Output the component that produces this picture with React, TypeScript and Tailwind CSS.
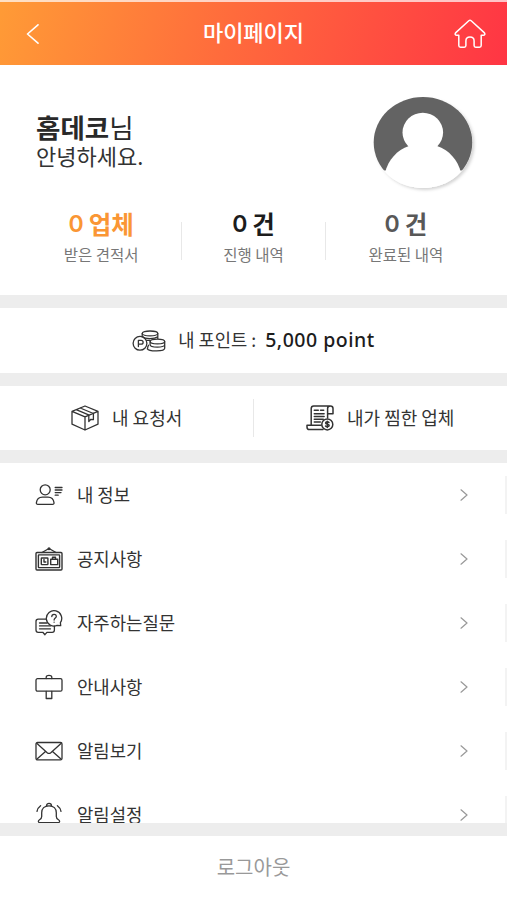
import React from "react";

interface IconProps {
  className?: string;
}

interface MenuItem {
  label: string;
  icon: React.FC<IconProps>;
}

const Svg: React.FC<{ className?: string; viewBox: string; width?: number; children: React.ReactNode }> = ({
  className,
  viewBox,
  width = 1.3,
  children,
}) => (
  <svg
    className={className}
    viewBox={viewBox}
    fill="none"
    stroke="currentColor"
    strokeWidth={width}
    strokeLinecap="round"
    strokeLinejoin="round"
  >
    {children}
  </svg>
);

const HomeIcon = ({ className }: IconProps) => (
  <Svg className={className} viewBox="0 0 32 30" width={1.5}>
    <path d="M14.8 1.7 1.8 13.6c-1.2 1.2-.6 2.7 1 2.7h2v10.2c0 1 .6 1.7 1.7 1.7h3.8c1 0 1.6-.6 1.6-1.6v-4.7c0-5.2 8.2-5.2 8.2 0v4.7c0 1 .6 1.6 1.6 1.6h3.8c1.1 0 1.7-.7 1.7-1.7V16.3h2c1.6 0 2.2-1.5 1-2.7L17.2 1.7c-.8-.7-1.6-.7-2.4 0Z" />
  </Svg>
);

const CoinsIcon = ({ className }: IconProps) => (
  <Svg className={className} viewBox="0 0 34 22">
    <ellipse cx="18" cy="3.4" rx="7.8" ry="2.4" />
    <path d="M10.2 3.6v3.2M25.8 3.6v5M10.8 6.6c2 2.600 11.500 2.600 15 .2M14.500 10.300h3.500" />
    <circle cx="8" cy="13.3" r="6.9" />
    <path d="M6.400 16.500v-6.200h2.700c2.700 0 2.700 3.900 0 3.900H6.400" />
    <ellipse cx="25.4" cy="11.5" rx="7.3" ry="2.4" />
    <path d="M18.100 11.700v3c0 3.200 14.600 3.200 14.600 0v-3M32.700 14.700v3.500c0 3.400-15.600 3.400-17.400.6M16.500 15.300c-.7 1-.9 2-.9 3.200" />
  </Svg>
);

const BoxIcon = ({ className }: IconProps) => (
  <Svg className={className} viewBox="0 0 28 26">
    <path d="M14 1 27 6.300v12.900L14 25 1 19.200V6.300ZM1 6.300l13 5.600 13-5.600M14 11.900V25M5.200 4.600l13 5.500M9.200 3l13.200 5.500" />
    <path d="M17.800 10.300v6.200l2.100-2.200 2.500.3V8.500" />
  </Svg>
);

const BillIcon = ({ className }: IconProps) => (
  <Svg className={className} viewBox="0 0 28 26" width={1.5}>
    <path d="M5.200 20V3.600C5.200 2 6 1 7.700 1h16.600M21.600 8.800V3.600c0-3.400 5.400-3.400 5.400 0v5.200h-5.400ZM21.600 8.800V13M17 24.600H3.400C1.800 24.600 1 23.400 1 22v-1.800h14.200M8.300 5.200h4M14.500 5.200h3.200M8.300 8.700h9.800M8.300 11.400h9.800M8.300 14.200h9M8.300 17h6" />
    <circle cx="21.3" cy="19.4" r="5.5" />
    <path d="M23 17.500c-1-1.200-3.400-.8-3.400.6 0 1.600 3.600.8 3.600 2.500 0 1.400-2.800 1.700-3.700.4M21.300 16.200v6.400" />
  </Svg>
);

const ProfileIcon = ({ className }: IconProps) => (
  <Svg className={className} viewBox="0 0 28 26">
    <circle cx="10.2" cy="7.8" r="5" />
    <path d="M2.800 22.300h14.800c1 0 1.500-.6 1.400-1.600-.5-3.600-2.900-5.500-6-5.500H7.400c-3.200 0-5.500 1.900-6 5.500-.1 1 .4 1.600 1.400 1.600Z" />
    <path d="M20.200 5.500H27M20.200 8H27M20.200 10.600H26M20.200 13.200h3" />
  </Svg>
);

const BoardIcon = ({ className }: IconProps) => (
  <Svg className={className} viewBox="0 0 28 26" width={1.4}>
    <path d="M7 6.500 14 2.500l7 4" />
    <circle cx="14" cy="2.8" r=".8" />
    <rect x="1" y="6.5" width="26" height="17.5" rx="1" />
    <rect x="3.4" y="8.9" width="21.2" height="12.7" rx=".5" />
    <rect x="6.3" y="12" width="6.6" height="6.6" rx=".5" />
    <path d="M9 13.500v2.500h1.800M15.700 13.200h7v5.400h-7ZM17.500 13v-1.800h3V13" />
  </Svg>
);

const FaqIcon = ({ className }: IconProps) => (
  <Svg className={className} viewBox="0 0 28 26">
    <path d="M25.700 15.600 25.400 12.700a7.700 7.700 0 1 0-3.200 2.700Z" />
    <path d="M16.800 6.600c0-3 4.500-3 4.500-.2 0 1.700-2.200 1.700-2.200 3.700M19.100 12.100v.1" />
    <path d="M11.400 9.200H3.200C1.800 9.200 1 10 1 11.400v8.700c0 1.400.8 2.200 2.200 2.200h4.600l2.100 2.400 2-2.400h5.300c1.400 0 2.200-.8 2.200-2.200v-4M4.500 13h7.500M4.500 15.900h11M4.500 18.800h11" />
  </Svg>
);

const SignIcon = ({ className }: IconProps) => (
  <Svg className={className} viewBox="0 0 28 26">
    <rect x="1" y="4.7" width="26" height="12.5" rx="1.5" />
    <path d="M11.200 4.500V3.200c0-2.500 5.600-2.500 5.600 0v1.300M11.200 17.300v7.200h5.600v-7.200" />
  </Svg>
);

const MailIcon = ({ className }: IconProps) => (
  <Svg className={className} viewBox="0 0 28 26">
    <rect x="1" y="4.5" width="26" height="17.4" rx="1.5" />
    <path d="m2 5.400 10.200 9.300c1.200 1 2.400 1 3.600 0L26 5.400M2 21l8.500-7.600M26 21l-8.500-7.600" />
  </Svg>
);

const BellIcon = ({ className }: IconProps) => (
  <Svg className={className} viewBox="0 0 28 26">
    <path d="M11.500 4c0-3.400 5-3.400 5 0M14 3.800c-4.600 0-7.300 3-7.300 7v3.700c0 1.800-.6 2.400-2.200 3.300-1.800 1-1.200 2.800.4 2.800h18.200c1.600 0 2.200-1.800.4-2.800-1.600-.9-2.200-1.500-2.200-3.300v-3.700c0-4-2.700-7-7.300-7Z" />
    <path d="M5.600 3.700C3.500 5.200 2.400 7 2 9.300M22.400 3.700c2.100 1.500 3.200 3.300 3.600 5.600" />
  </Svg>
);

const Avatar = () => (
  <svg className="h-[102px] w-[108px]" viewBox="0 0 108 102">
    <defs>
      <clipPath id="face">
        <ellipse cx="51" cy="48.5" rx="49.3" ry="45.5" />
      </clipPath>
      <filter id="shade" x="-20%" y="-20%" width="140%" height="140%">
        <feDropShadow dx="2" dy="2" stdDeviation="1.5" floodColor="#000" floodOpacity=".17" />
      </filter>
    </defs>
    <ellipse cx="51" cy="48.5" rx="49.3" ry="45.5" fill="#fff" filter="url(#shade)" />
    <g clipPath="url(#face)">
      <path d="M0 0h108v76.500H0z" fill="#636363" />
      <ellipse cx="50.8" cy="38.5" rx="20.3" ry="19.7" fill="#fff" />
      <path d="M13 79c3-13 12-23 24-27h28c12 4 21 14 24 27v22H13Z" fill="#fff" />
    </g>
  </svg>
);

const stats = [
  { value: "0", unit: "업체", label: "받은 견적서", color: "text-[#fa9634]" },
  { value: "0", unit: "건", label: "진행 내역", color: "text-[#1c1c1c]" },
  { value: "0", unit: "건", label: "완료된 내역", color: "text-[#585858]" },
];

const menu: MenuItem[] = [
  { label: "내 정보", icon: ProfileIcon },
  { label: "공지사항", icon: BoardIcon },
  { label: "자주하는질문", icon: FaqIcon },
  { label: "안내사항", icon: SignIcon },
  { label: "알림보기", icon: MailIcon },
  { label: "알림설정", icon: BellIcon },
];

const Gap = () => <div className="h-[13px] shrink-0 bg-[#ededed]" />;

const App: React.FC = () => {
  return (
    <div className="flex h-[900px] w-[507px] flex-col overflow-hidden bg-white font-['Noto_Sans_CJK_KR',sans-serif] text-[#333]">
      <header className="flex h-[65px] shrink-0 items-center justify-between border-t-2 border-white/70 bg-[linear-gradient(105deg,#ff9b36_0%,#ff6b3c_45%,#ff3544_100%)] pr-[21px] pl-[26px] text-white">
        <Svg className="h-5 w-8" viewBox="0 0 32 20" width={1.6}>
          <path d="M12 .8 1.500 10 12 19.200" />
        </Svg>
        <h1 className="mr-[5px] pb-[6px] text-[22px] leading-none font-medium">마이페이지</h1>
        <HomeIcon className="h-[30px] w-8" />
      </header>

      <section className="flex h-[230px] shrink-0 flex-col">
        <div className="flex h-[136px] items-start justify-between pt-[29px] pr-[27px] pl-9">
          <div className="pt-[19px]">
            <p className="text-[26.5px] leading-[28px] font-bold text-[#292929]">
              홈데코<span className="font-normal">님</span>
            </p>
            <p className="text-[22px] leading-[28px]">안녕하세요.</p>
          </div>
          <Avatar />
        </div>
        <div className="flex items-start pr-[21px] pl-[21px]">
          {stats.map((s, i) => (
            <React.Fragment key={s.label}>
              {i > 0 && <div className="mt-[21px] h-[38px] w-px shrink-0 bg-[#e8e8e8]" />}
              <div className={`flex flex-col items-center ${i === 1 ? "w-[143px]" : "w-[161px]"}`}>
                <span className={`flex gap-[5px] text-[24.5px] leading-[46px] font-bold ${s.color}`}>
                  <span className="font-['Inter'] text-[23px] font-semibold">{s.value}</span>
                  <span>{s.unit}</span>
                </span>
                <span className="text-[15.5px] leading-[15px] text-[#777]">{s.label}</span>
              </div>
            </React.Fragment>
          ))}
        </div>
      </section>
      <Gap />

      <section className="flex h-[65px] shrink-0 items-center justify-center pb-0.5">
        <CoinsIcon className="mt-0.5 mr-[12px] h-[22px] w-[34px]" />
        <span className="text-[17.7px]">내 포인트 :</span>
        <span className="ml-[9px] font-['Noto_Sans'] text-[19.5px] font-medium tracking-[0.5px] text-[#1c1c1c]">
          5,000 point
        </span>
      </section>
      <Gap />

      <section className="flex h-16 shrink-0 items-center text-[18px]">
        <div className="flex h-[38px] w-[254px] items-center border-r border-[#e8e8e8] pl-[71px]">
          <BoxIcon className="mr-[13px] h-[26px] w-7" />
          <span className="pb-0.5">내 요청서</span>
        </div>
        <div className="flex items-center pl-[52px]">
          <BillIcon className="mr-[13px] h-[26px] w-7" />
          <span className="pb-0.5">내가 찜한 업체</span>
        </div>
      </section>
      <Gap />

      <ul className="h-[360px] shrink-0 overflow-hidden">
        {menu.map(({ label, icon: Icon }) => (
          <li key={label} className="flex h-16 items-center pl-[35px] text-[17.8px]">
            <Icon className="mr-[14px] h-[26px] w-7" />
            <span className="pb-0.5">{label}</span>
            <Svg className="mr-[37px] ml-auto h-3 w-2 text-[#999]" viewBox="0 0 8 12" width={1.2}>
              <path d="M1 .8 7 6l-6 5.200" />
            </Svg>
            <span className="h-[38px] w-0.5 bg-[#f3f3f3]" />
          </li>
        ))}
      </ul>
      <Gap />

      <footer className="flex flex-1 items-center justify-center pb-0.5 text-[20px] text-[#999]">로그아웃</footer>
    </div>
  );
};

export default App;
